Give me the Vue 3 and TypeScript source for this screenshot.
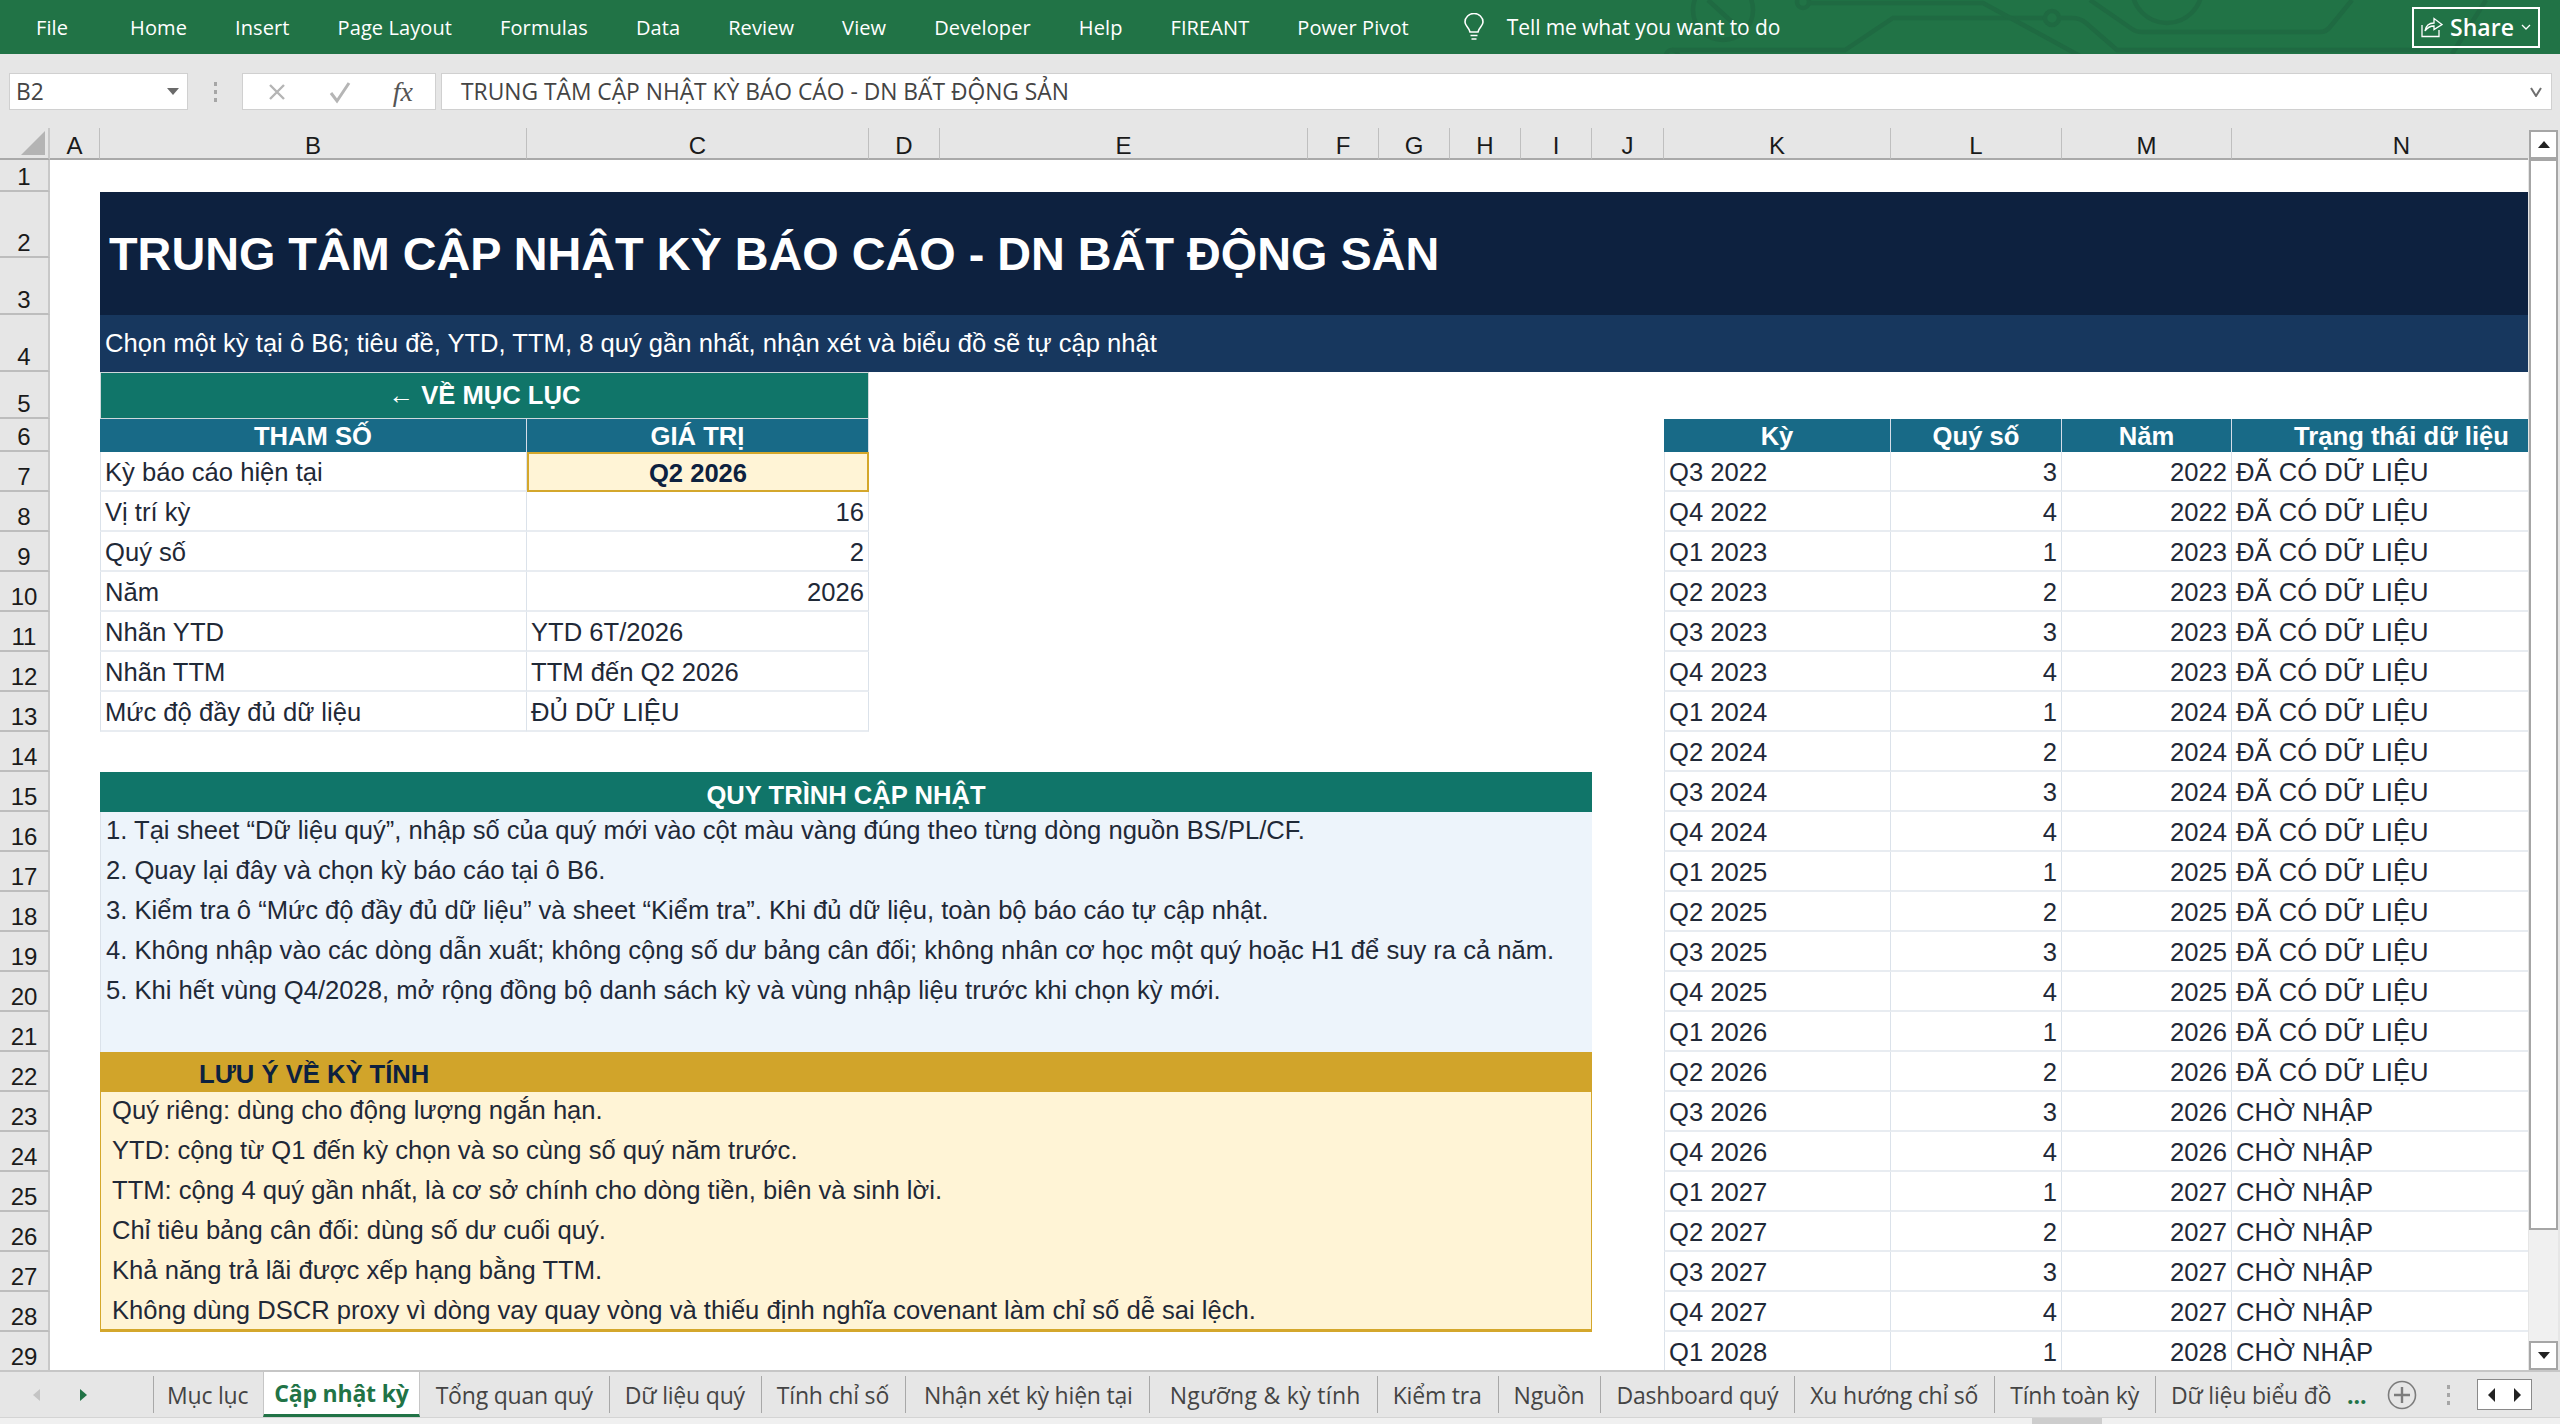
<template>
  <div class="app">
    <header class="ribbon">
      <svg class="circuit" viewBox="0 0 2560 54" width="2560" height="54" fill="none">
        <circle cx="1723" cy="10" r="30" />
        <path d="M1708 0 L1732 22" />
        <circle cx="1672" cy="56" r="6" />
        <path d="M1672 50 H1845 L1893 18 H2045" />
        <circle cx="1803" cy="2" r="6" />
        <path d="M1809 3 H1983 L2080 56" />
        <circle cx="2052" cy="18" r="7" />
        <path d="M2059 18 H2072 Q2080 18 2086 23 L2117 50 H2420" />
        <path d="M2090 0 L2132 29 Q2136 32 2142 32 H2320 Q2326 32 2330 27 L2352 0" />
        <circle cx="2167" cy="-12" r="35" />
        <path d="M2452 54 L2486 0" />
      </svg>
      <nav class="menu">
        <span v-for="m in menus" :key="m" class="menu-item">{{ m }}</span>
      </nav>
      <svg class="bulb" viewBox="0 0 22 28" width="22" height="28" fill="none" stroke="#fff" stroke-width="1.6">
        <path d="M7 19 C6 14 2 13 2 9 A9 8.5 0 0 1 20 9 C20 13 16 14 15 19 Z" />
        <path d="M7.5 22.5 H14.5 M8.5 26 H13.5" />
      </svg>
      <span class="tell">Tell me what you want to do</span>
      <div class="share">
        <svg viewBox="0 0 22 22" width="22" height="22" fill="none" stroke="#fff" stroke-width="1.3">
          <path d="M1 9 V20.5 H18 V14" />
          <path d="M4 15 C5 9 9 7 13 7 V2.5 L21 8.5 L13 13.5 V10 C9 10 6 12 4 15 Z" />
        </svg>
        <span>Share</span>
        <svg viewBox="0 0 10 6" width="10" height="6" fill="none" stroke="#fff" stroke-width="1.3"><path d="M1 1 L5 5 L9 1" /></svg>
      </div>
    </header>

    <div class="formula-bar">
      <div class="name-box">
        <span>B2</span>
        <i class="drop"></i>
      </div>
      <div class="dots"><i></i><i></i><i></i></div>
      <div class="fx-box">
        <svg viewBox="0 0 20 20" width="20" height="20" fill="none" stroke="#b5b5b5" stroke-width="2.4"><path d="M3 3 L17 17 M17 3 L3 17" /></svg>
        <svg viewBox="0 0 24 24" width="24" height="24" fill="none" stroke="#b5b5b5" stroke-width="3"><path d="M3 13 L9 21 L21 3" /></svg>
        <span class="fx">fx</span>
      </div>
      <div class="formula-input">
        <span>{{ title }}</span>
        <svg viewBox="0 0 12 10" width="12" height="10" fill="none" stroke="#6f6f6f" stroke-width="2"><path d="M1 1 L6 9 L11 1" /></svg>
      </div>
    </div>

    <div class="work">
      <div class="sheet-clip">
        <div class="sheet">
          <div class="corner"><i></i></div>
          <div v-for="c in cols" :key="c" class="col-head">{{ c }}</div>
          <div v-for="r in 29" :key="r" class="row-head" :style="{ gridRow: r + 1 }">{{ r }}</div>

          <div class="title">{{ title }}</div>
          <div class="subtitle">Chọn một kỳ tại ô B6; tiêu đề, YTD, TTM, 8 quý gần nhất, nhận xét và biểu đồ sẽ tự cập nhật</div>
          <div class="back">← VỀ MỤC LỤC</div>

          <div class="params">
            <div class="th">THAM SỐ</div>
            <div class="th">GIÁ TRỊ</div>
            <template v-for="p in params" :key="p.label">
              <div class="td">{{ p.label }}</div>
              <div class="td" :class="p.kind">{{ p.value }}</div>
            </template>
          </div>

          <div class="process-head">QUY TRÌNH CẬP NHẬT</div>
          <div class="process">
            <div v-for="s in steps" :key="s">{{ s }}</div>
          </div>
          <div class="notes-head">LƯU Ý VỀ KỲ TÍNH</div>
          <div class="notes">
            <div v-for="n in notes" :key="n">{{ n }}</div>
          </div>

          <div class="periods">
            <div v-for="h in periodHeads" :key="h" class="th">{{ h }}</div>
            <template v-for="p in periods" :key="p.name">
              <div class="td">{{ p.name }}</div>
              <div class="td right">{{ p.q }}</div>
              <div class="td right">{{ p.y }}</div>
              <div class="td">{{ p.status }}</div>
            </template>
          </div>
        </div>
      </div>
      <aside class="vscroll">
        <div class="sb-btn sb-up"><i></i></div>
        <div class="sb-thumb"></div>
        <div class="sb-track"></div>
        <div class="sb-btn sb-down"><i></i></div>
      </aside>
    </div>

    <footer class="tabs">
      <div class="tab-nav">
        <i class="nav-left"></i>
        <i class="nav-right"></i>
      </div>
      <div class="tab-list">
        <span v-for="t in tabs" :key="t" class="tab" :class="{ active: t === 'Cập nhật kỳ' }">{{ t }}</span>
        <span class="tab last">Dữ liệu biểu đồ</span>
      </div>
      <span class="more">...</span>
      <span class="add">
        <svg viewBox="0 0 30 30" width="30" height="30" fill="none" stroke="#7c7c7c" stroke-width="1.6">
          <circle cx="15" cy="15" r="13.5" />
          <path d="M15 7 V23 M7 15 H23" stroke-width="2.4" />
        </svg>
      </span>
      <div class="dots tab-dots"><i></i><i></i><i></i></div>
      <div class="tab-arrows">
        <i class="arrow-l"></i>
        <i class="arrow-r"></i>
      </div>
    </footer>
    <div class="status"><i></i></div>
  </div>
</template>

<script setup lang="ts">
const title = 'TRUNG TÂM CẬP NHẬT KỲ BÁO CÁO - DN BẤT ĐỘNG SẢN'

const menus = ['File', 'Home', 'Insert', 'Page Layout', 'Formulas', 'Data', 'Review', 'View', 'Developer', 'Help', 'FIREANT', 'Power Pivot']
const cols = 'ABCDEFGHIJKLMN'.split('')

const params = [
  { label: 'Kỳ báo cáo hiện tại', value: 'Q2 2026', kind: 'current' },
  { label: 'Vị trí kỳ', value: '16', kind: 'right' },
  { label: 'Quý số', value: '2', kind: 'right' },
  { label: 'Năm', value: '2026', kind: 'right' },
  { label: 'Nhãn YTD', value: 'YTD 6T/2026', kind: '' },
  { label: 'Nhãn TTM', value: 'TTM đến Q2 2026', kind: '' },
  { label: 'Mức độ đầy đủ dữ liệu', value: 'ĐỦ DỮ LIỆU', kind: '' }
]

const steps = [
  '1. Tại sheet “Dữ liệu quý”, nhập số của quý mới vào cột màu vàng đúng theo từng dòng nguồn BS/PL/CF.',
  '2. Quay lại đây và chọn kỳ báo cáo tại ô B6.',
  '3. Kiểm tra ô “Mức độ đầy đủ dữ liệu” và sheet “Kiểm tra”. Khi đủ dữ liệu, toàn bộ báo cáo tự cập nhật.',
  '4. Không nhập vào các dòng dẫn xuất; không cộng số dư bảng cân đối; không nhân cơ học một quý hoặc H1 để suy ra cả năm.',
  '5. Khi hết vùng Q4/2028, mở rộng đồng bộ danh sách kỳ và vùng nhập liệu trước khi chọn kỳ mới.'
]

const notes = [
  'Quý riêng: dùng cho động lượng ngắn hạn.',
  'YTD: cộng từ Q1 đến kỳ chọn và so cùng số quý năm trước.',
  'TTM: cộng 4 quý gần nhất, là cơ sở chính cho dòng tiền, biên và sinh lời.',
  'Chỉ tiêu bảng cân đối: dùng số dư cuối quý.',
  'Khả năng trả lãi được xếp hạng bằng TTM.',
  'Không dùng DSCR proxy vì dòng vay quay vòng và thiếu định nghĩa covenant làm chỉ số dễ sai lệch.'
]

const periodHeads = ['Kỳ', 'Quý số', 'Năm', 'Trạng thái dữ liệu']

// Q3 2022 -> Q1 2028, đủ dữ liệu tới Q2 2026
const periods = Array.from({ length: 23 }, (_, i) => {
  const n = i + 2
  const q = (n % 4) + 1
  const y = 2022 + Math.floor(n / 4)
  return { name: `Q${q} ${y}`, q, y, status: i < 16 ? 'ĐÃ CÓ DỮ LIỆU' : 'CHỜ NHẬP' }
})

const tabs = ['Mục lục', 'Cập nhật kỳ', 'Tổng quan quý', 'Dữ liệu quý', 'Tính chỉ số', 'Nhận xét kỳ hiện tại', 'Ngưỡng & kỳ tính', 'Kiểm tra', 'Nguồn', 'Dashboard quý', 'Xu hướng chỉ số', 'Tính toàn kỳ']
</script>

<style>
html, body { margin: 0; background: #fff; }
</style>

<style scoped>
.app {
  width: 2560px;
  height: 1424px;
  display: flex;
  flex-direction: column;
  overflow: hidden;
  font-family: "Liberation Sans", Arial, sans-serif;
  color: #1f2937;
}

/* ribbon */
.ribbon {
  position: relative;
  height: 54px;
  flex: none;
  box-sizing: border-box;
  padding-left: 36px;
  background: #217346;
  display: flex;
  align-items: center;
  color: #fff;
  font-family: "Open Sans", sans-serif;
  font-size: 20px;
  overflow: hidden;
}
.circuit {
  position: absolute;
  left: 0;
  top: 0;
}
.circuit * { stroke: #1f6a42; stroke-width: 4.5; }
.menu {
  position: relative;
  display: flex;
  gap: 48px;
  letter-spacing: 0.1px;
}
.menu-item:first-child { margin-right: 14px; }
.bulb {
  position: relative;
  margin-left: 54px;
}
.tell {
  position: relative;
  margin-left: 22px;
  font-size: 21px;
  letter-spacing: -0.1px;
}
.share {
  position: relative;
  margin-left: auto;
  margin-right: 20px;
  width: 128px;
  height: 41px;
  box-sizing: border-box;
  border: 2px solid #fff;
  display: flex;
  align-items: center;
  justify-content: center;
  gap: 7px;
  font-size: 23px;
  font-weight: 600;
}

/* formula bar */
.formula-bar {
  height: 74px;
  flex: none;
  box-sizing: border-box;
  padding: 19px 8px 18px 9px;
  background: #e6e6e6;
  display: flex;
  align-items: stretch;
  font-family: "Open Sans", sans-serif;
  font-size: 22.8px;
  color: #444;
}
.name-box {
  width: 179px;
  box-sizing: border-box;
  padding: 0 8px 0 6px;
  background: #fff;
  border: 1px solid #d0d0d0;
  display: flex;
  align-items: center;
  justify-content: space-between;
}
.drop {
  width: 0;
  height: 0;
  border-left: 6px solid transparent;
  border-right: 6px solid transparent;
  border-top: 7px solid #6a6a6a;
}
.dots {
  width: 54px;
  display: flex;
  flex-direction: column;
  align-items: center;
  justify-content: center;
  gap: 4px;
}
.dots i {
  width: 3px;
  height: 4px;
  background: #a6a6a6;
}
.fx-box {
  width: 194px;
  box-sizing: border-box;
  padding: 0 22px 0 24px;
  background: #fff;
  border: 1px solid #d0d0d0;
  display: flex;
  align-items: center;
  justify-content: space-between;
}
.fx {
  font-family: "Liberation Serif", serif;
  font-style: italic;
  font-size: 28px;
  color: #555;
}
.formula-input {
  flex: 1;
  margin-left: 5px;
  box-sizing: border-box;
  padding: 0 9px 0 19px;
  background: #fff;
  border: 1px solid #d0d0d0;
  display: flex;
  align-items: center;
  justify-content: space-between;
}

/* sheet */
.work {
  height: 1242px;
  flex: none;
  display: flex;
  background: #e6e6e6;
}
.sheet-clip {
  width: 2528px;
  overflow: hidden;
  background: #fff;
}
.sheet {
  width: 2572px;
  display: grid;
  grid-template-columns: 50px 50px 427px 342px 71px 368px 71px 71px 71px 71px 72px 227px 171px 170px 340px;
  grid-template-rows: 32px 32px 66px 57px 57px 47px 33px repeat(23, 40px);
  font-size: 25.6px;
  line-height: 1;
}
.corner {
  grid-row: 1;
  grid-column: 1;
  background: #e6e6e6;
  border-bottom: 2px solid #a9a9a9;
  border-right: 2px solid #c8c8c8;
  box-sizing: border-box;
  position: relative;
}
.corner i {
  position: absolute;
  right: 3px;
  bottom: 3px;
  width: 24px;
  height: 24px;
  background: #b4b4b4;
  clip-path: polygon(100% 0, 100% 100%, 0 100%);
}
.col-head {
  grid-row: 1;
  background: #e6e6e6;
  box-sizing: border-box;
  border-bottom: 2px solid #a9a9a9;
  border-right: 1px solid #bfbfbf;
  display: flex;
  align-items: center;
  justify-content: center;
  padding-top: 6px;
  font-size: 24px;
  color: #1a1a1a;
}
.row-head {
  grid-column: 1;
  background: #e6e6e6;
  box-sizing: border-box;
  border-bottom: 2px solid #bdbdbd;
  border-right: 2px solid #c8c8c8;
  display: flex;
  align-items: flex-end;
  justify-content: center;
  line-height: 27px;
  font-size: 24px;
  color: #1a1a1a;
}
.title {
  grid-column: 3 / 16;
  grid-row: 3 / 5;
  background: #0d213f;
  color: #fff;
  font-size: 46.8px;
  font-weight: 700;
  display: flex;
  align-items: center;
  padding: 2px 0 0 9px;
}
.subtitle {
  grid-column: 3 / 16;
  grid-row: 5;
  background: #17375e;
  color: #fff;
  display: flex;
  align-items: center;
  padding-left: 5px;
}
.back {
  grid-column: 3 / 5;
  grid-row: 6;
  background: #107569;
  color: #fff;
  font-weight: 700;
  border: 1px solid #cfd8dc;
  display: flex;
  align-items: center;
  justify-content: center;
}

.params,
.periods {
  display: grid;
  grid-auto-rows: 40px;
}
.params {
  grid-column: 3 / 5;
  grid-row: 7 / 15;
  grid-template-columns: 427px 342px;
  grid-template-rows: 33px;
}
.periods {
  grid-column: 12 / 16;
  grid-row: 7 / 31;
  grid-template-columns: 227px 171px 170px 340px;
  grid-template-rows: 33px;
}
.th {
  background: #186a87;
  color: #fff;
  font-weight: 700;
  box-sizing: border-box;
  border-right: 1px solid #d5dde8;
  overflow: hidden;
  display: flex;
  align-items: center;
  justify-content: center;
  padding-top: 2px;
}
.td {
  box-sizing: border-box;
  padding: 3px 4px 0;
  border-bottom: 2px solid #e8ecf1;
  border-right: 1px solid #dbe2ea;
  display: flex;
  align-items: center;
  overflow: hidden;
  white-space: nowrap;
}
.params .td:nth-child(odd),
.periods .td:nth-child(4n + 1) {
  border-left: 1px solid #dbe2ea;
}
.right { justify-content: flex-end; }
.current {
  justify-content: center;
  background: #fff4d6;
  border: 2px solid #d4a72c;
  font-weight: 700;
  color: #0d213f;
}

.process-head {
  grid-column: 3 / 11;
  grid-row: 16;
  background: #107569;
  color: #fff;
  font-weight: 700;
  display: flex;
  align-items: flex-end;
  justify-content: center;
  padding-bottom: 3px;
}
.process {
  grid-column: 3 / 11;
  grid-row: 17 / 23;
  background: #edf4fb;
  border-left: 1px solid #dbe2ea;
  padding-left: 5px;
  display: grid;
  grid-auto-rows: 40px;
}
.process div {
  line-height: 36px;
  white-space: nowrap;
}
.notes-head {
  grid-column: 3 / 11;
  grid-row: 23;
  background: #d1a42a;
  color: #0d213f;
  font-weight: 700;
  display: flex;
  align-items: flex-end;
  padding: 0 0 4px 99px;
}
.notes {
  grid-column: 3 / 11;
  grid-row: 24 / 30;
  box-sizing: border-box;
  background: #fff4d6;
  border: 1px solid #d4a72c;
  border-top: 0;
  border-bottom-width: 3px;
  padding-left: 11px;
  display: grid;
  grid-auto-rows: 40px;
}
.notes div {
  line-height: 37px;
  white-space: nowrap;
}

/* vertical scrollbar */
.vscroll {
  width: 32px;
  display: flex;
  flex-direction: column;
  box-sizing: border-box;
  padding: 2px 2px 0 1px;
}
.sb-btn {
  height: 29px;
  flex: none;
  box-sizing: border-box;
  background: #fff;
  border: 2px solid #a6a6a6;
  display: flex;
  align-items: center;
  justify-content: center;
}
.sb-up i {
  width: 0;
  height: 0;
  border-left: 6px solid transparent;
  border-right: 6px solid transparent;
  border-bottom: 7px solid #222;
}
.sb-down i {
  width: 0;
  height: 0;
  border-left: 6px solid transparent;
  border-right: 6px solid transparent;
  border-top: 7px solid #222;
}
.sb-thumb {
  height: 1071px;
  flex: none;
  box-sizing: border-box;
  background: #fff;
  border: 2px solid #a6a6a6;
}
.sb-track {
  flex: 1;
  background: #f0f0f0;
}

/* sheet tabs */
.tabs {
  height: 47px;
  flex: none;
  box-sizing: border-box;
  background: #e6e6e6;
  border-top: 2px solid #c6c6c6;
  display: flex;
  align-items: stretch;
  font-family: "Open Sans", sans-serif;
  font-size: 23px;
  color: #444;
}
.tab-nav {
  width: 153px;
  flex: none;
  position: relative;
}
.nav-left,
.nav-right {
  position: absolute;
  top: 17px;
  width: 0;
  height: 0;
  border-top: 6px solid transparent;
  border-bottom: 6px solid transparent;
}
.nav-left {
  left: 33px;
  border-right: 7px solid #c4c4c4;
}
.nav-right {
  left: 80px;
  border-left: 7px solid #217346;
}
.tab-list {
  width: 2179px;
  flex: none;
  display: flex;
  overflow: hidden;
}
.tab {
  flex: none;
  box-sizing: border-box;
  padding: 0 16px;
  display: flex;
  align-items: center;
  white-space: nowrap;
  letter-spacing: -0.2px;
  position: relative;
}
.tab:nth-child(1) { padding: 0 15px 0 14px; }
.tab:nth-child(6) { padding-left: 19px; }
.tab:nth-child(7) {
  padding-left: 21px;
  letter-spacing: 0.3px;
}
.tab::before {
  content: '';
  position: absolute;
  left: 0;
  top: 4px;
  bottom: 4px;
  width: 1px;
  background: #a8a8a8;
}
.tab.active {
  margin-top: -2px;
  padding: 2px 10px 0;
  background: #fff;
  border-bottom: 3px solid #217346;
  border-left: 1px solid #c6c6c6;
  border-right: 1px solid #c6c6c6;
  color: #217346;
  font-weight: 700;
}
.tab.active::before,
.tab.active + .tab::before { display: none; }
.more {
  width: 30px;
  margin-left: 15px;
  color: #217346;
  font-weight: 700;
  display: flex;
  align-items: center;
}
.add {
  margin-left: 10px;
  display: flex;
  align-items: center;
}
.tab-dots {
  width: 62px;
  flex: none;
}
.tab-arrows {
  width: 55px;
  height: 31px;
  align-self: center;
  box-sizing: border-box;
  background: #fff;
  border: 1px solid #8a8a8a;
  display: flex;
  align-items: center;
  justify-content: space-around;
  margin-left: -2px;
}
.arrow-l,
.arrow-r {
  width: 0;
  height: 0;
  border-top: 7px solid transparent;
  border-bottom: 7px solid transparent;
}
.arrow-l { border-right: 7px solid #222; }
.arrow-r { border-left: 7px solid #222; }

.status {
  flex: 1;
  background: #f0f0f0;
  border-top: 1px solid #d4d4d4;
  position: relative;
}
.status i {
  position: absolute;
  left: 2032px;
  top: 0;
  width: 70px;
  height: 7px;
  background: #cdcdcd;
}
</style>
